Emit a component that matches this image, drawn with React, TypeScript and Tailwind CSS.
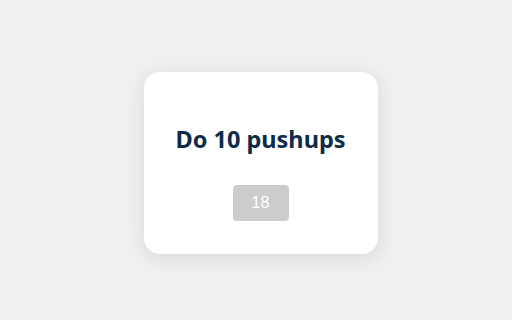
export default function App() {
    return (
        <div className="h-[320px] w-full bg-[#f0f0f0] flex items-center justify-center pl-[9px] pt-[6px]">
            <div className="w-[234px] h-[182px] bg-white rounded-[16px] shadow-[0_4px_20px_rgba(0,0,0,0.1)] flex flex-col items-center pt-[51px]">
                <h2 className="text-[23.5px] leading-[32px] font-bold text-[#0e2b47] font-['Noto_Sans',sans-serif]">
                    Do 10 pushups
                </h2>
                <button className="mt-[30px] w-[56px] h-[36px] rounded-[4px] bg-[#cccccc] text-white text-[16px] font-['Liberation_Sans',Arial,sans-serif]">
                    18
                </button>
            </div>
        </div>
    )
}
